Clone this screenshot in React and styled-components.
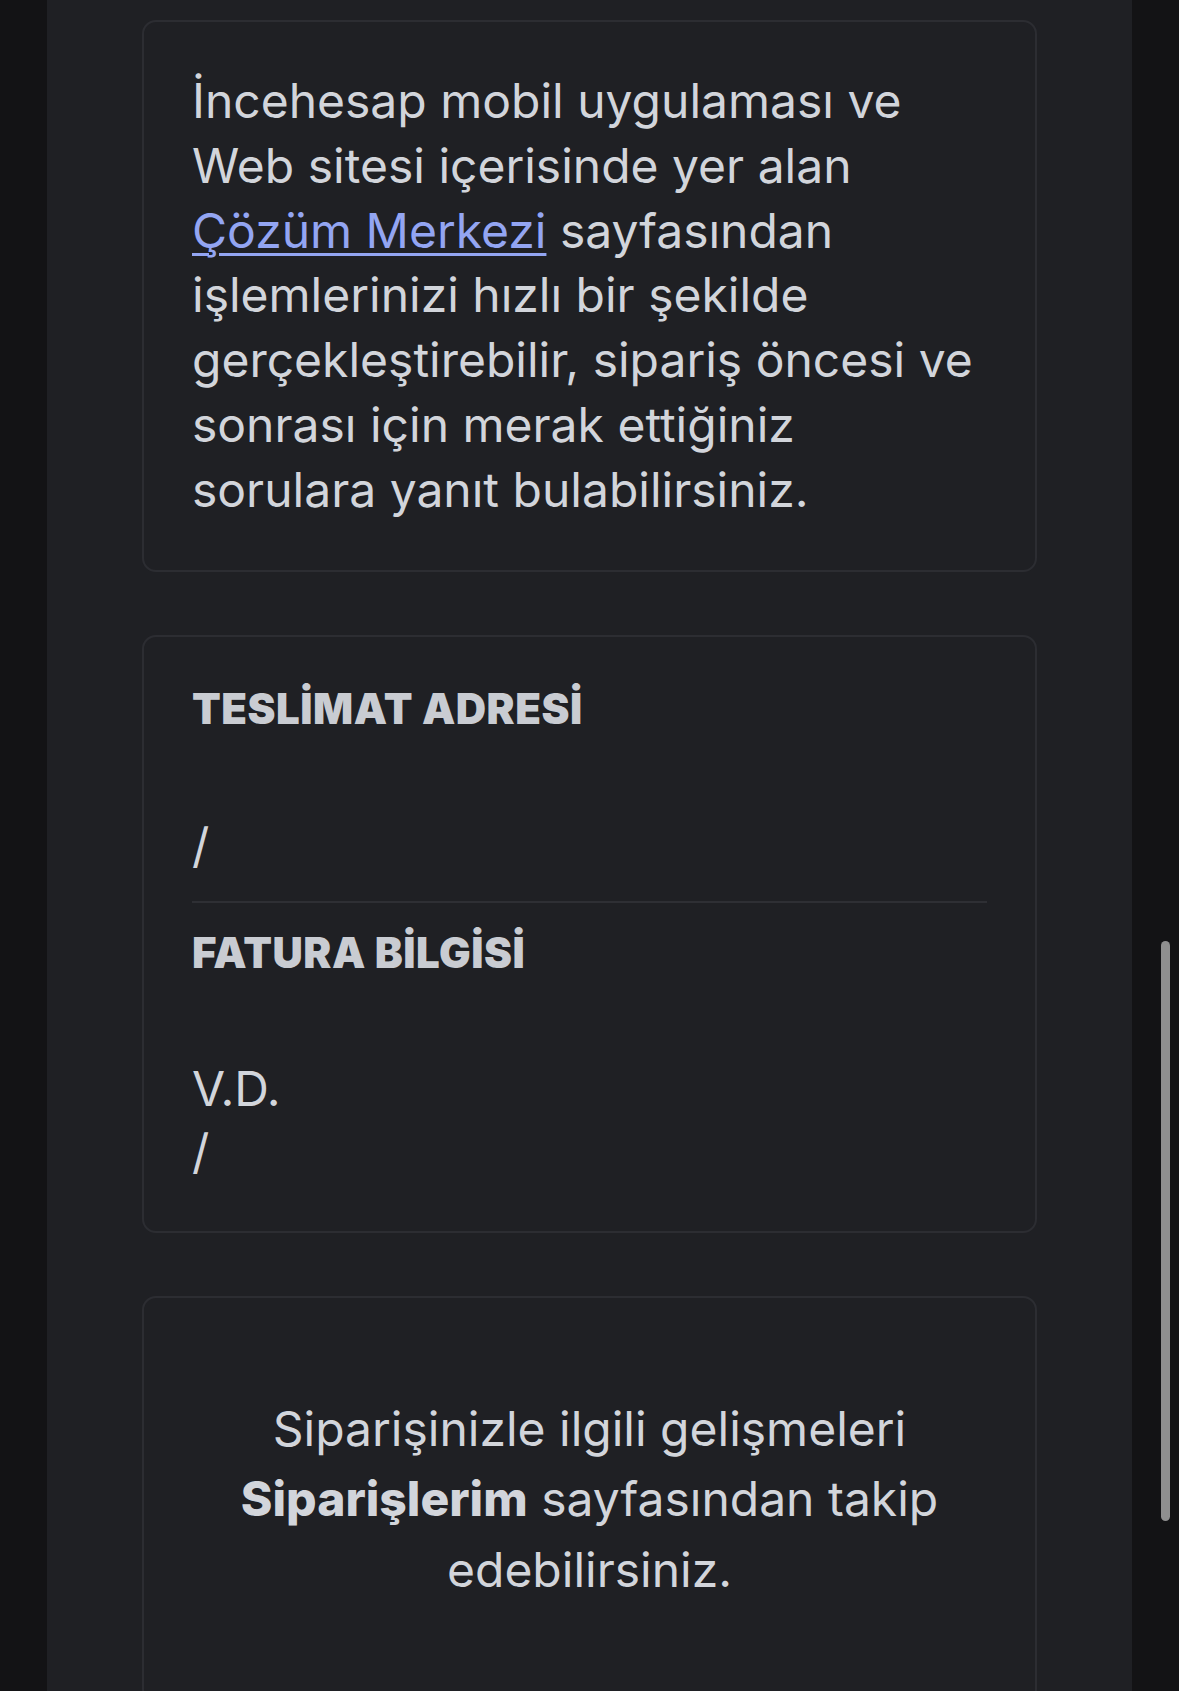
import React from "react";
import styled, { createGlobalStyle } from "styled-components";

const GlobalStyle = createGlobalStyle`
  html, body {
    margin: 0;
    padding: 0;
    background: #131315;
  }
  body {
    font-family: Inter, "Liberation Sans", Arial, sans-serif;
    -webkit-font-smoothing: antialiased;
  }
`;

const Screen = styled.div`
  height: 1691px;
  overflow: hidden;
  display: flex;
  justify-content: center;
  background: #131315;
`;

const Panel = styled.main`
  width: 1085px;
  box-sizing: border-box;
  background: #1f2024;
  padding: 20px 95px 0;
  display: flex;
  flex-direction: column;
  gap: 63px;
`;

const Card = styled.section`
  border: 2px solid #2c2d32;
  border-radius: 14px;
  padding: ${(p) => (p.$roomy ? "96px 48px" : "47px 48px")};
  text-align: ${(p) => (p.$center ? "center" : "left")};
`;

const Text = styled.p`
  margin: 0;
  font-size: 48px;
  line-height: ${(p) => p.$lh || 64.8}px;
  color: #d2d5db;
  b {
    font-weight: 800;
  }
`;

const Link = styled.a`
  color: #93a5f2;
  text-decoration: underline;
  text-decoration-thickness: 3px;
  text-underline-offset: 5px;
`;

const Heading = styled.h3`
  margin: 0 0 80px;
  font-size: 42px;
  line-height: 50px;
  font-weight: 900;
  letter-spacing: 0.5px;
  color: #c9ccd2;
`;

const Divider = styled.hr`
  border: 0;
  height: 2px;
  background: #2e2f34;
  margin: 23px 0 25px;
`;

const Scrollbar = styled.div`
  position: fixed;
  right: 9px;
  top: 941px;
  width: 9px;
  height: 580px;
  border-radius: 5px;
  background: #8f8f8f;
`;

export default function App() {
  return (
    <>
      <GlobalStyle />
      <Screen>
        <Panel>
          <Card>
            <Text>
              İncehesap mobil uygulaması ve Web sitesi içerisinde yer alan{" "}
              <Link href="#">Çözüm Merkezi</Link> sayfasından işlemlerinizi
              hızlı bir şekilde gerçekleştirebilir, sipariş öncesi ve sonrası
              için merak ettiğiniz sorulara yanıt bulabilirsiniz.
            </Text>
          </Card>

          <Card>
            <Heading>TESLİMAT ADRESİ</Heading>
            <Text>/</Text>
            <Divider />
            <Heading>FATURA BİLGİSİ</Heading>
            <Text $lh={62.6}>
              V.D.
              <br />/
            </Text>
          </Card>

          <Card $center $roomy>
            <Text $lh={70.6}>
              Siparişinizle ilgili gelişmeleri <b>Siparişlerim</b> sayfasından
              takip edebilirsiniz.
            </Text>
          </Card>
        </Panel>
      </Screen>
      <Scrollbar />
    </>
  );
}
